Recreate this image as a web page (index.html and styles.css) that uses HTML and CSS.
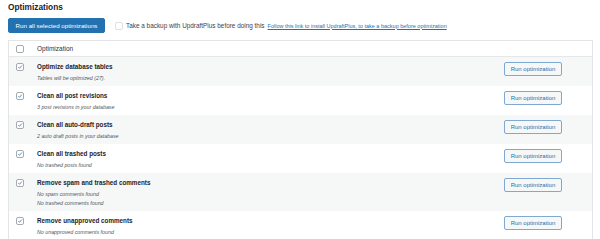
FILE: index.html
```html
<!DOCTYPE html>
<html>
<head>
<meta charset="utf-8">
<link rel="stylesheet" href="styles.css">
</head>
<body>
<div class="wrap">
  <h2 class="page-title">Optimizations</h2>
  <div class="actions">
    <button class="btn-primary">Run all selected optimizations</button>
    <label class="backup">
      <span class="cb cb-disabled"></span>
      <span class="backup-text">Take a backup with UpdraftPlus before doing this</span>
      <a class="backup-link" href="#">Follow this link to install UpdraftPlus, to take a backup before optimization</a>
    </label>
  </div>
  <div class="table">
    <div class="thead">
      <span class="cb"></span>
      <span class="th-label">Optimization</span>
    </div>
    <div class="row alt">
      <span class="cb checked"><svg viewBox="0 0 10 10"><path d="M2.2 5.2 L4.2 7.2 L8 2.6"/></svg></span>
      <div class="info">
        <div class="name">Optimize database tables</div>
        <div class="note">Tables will be optimized (27).</div>
      </div>
      <button class="btn-sec">Run optimization</button>
    </div>
    <div class="row">
      <span class="cb checked"><svg viewBox="0 0 10 10"><path d="M2.2 5.2 L4.2 7.2 L8 2.6"/></svg></span>
      <div class="info">
        <div class="name">Clean all post revisions</div>
        <div class="note">3 post revisions in your database</div>
      </div>
      <button class="btn-sec">Run optimization</button>
    </div>
    <div class="row alt">
      <span class="cb checked"><svg viewBox="0 0 10 10"><path d="M2.2 5.2 L4.2 7.2 L8 2.6"/></svg></span>
      <div class="info">
        <div class="name">Clean all auto-draft posts</div>
        <div class="note">2 auto draft posts in your database</div>
      </div>
      <button class="btn-sec">Run optimization</button>
    </div>
    <div class="row">
      <span class="cb checked"><svg viewBox="0 0 10 10"><path d="M2.2 5.2 L4.2 7.2 L8 2.6"/></svg></span>
      <div class="info">
        <div class="name">Clean all trashed posts</div>
        <div class="note">No trashed posts found</div>
      </div>
      <button class="btn-sec">Run optimization</button>
    </div>
    <div class="row alt">
      <span class="cb checked"><svg viewBox="0 0 10 10"><path d="M2.2 5.2 L4.2 7.2 L8 2.6"/></svg></span>
      <div class="info">
        <div class="name">Remove spam and trashed comments</div>
        <div class="note">No spam comments found</div>
        <div class="note">No trashed comments found</div>
      </div>
      <button class="btn-sec">Run optimization</button>
    </div>
    <div class="row">
      <span class="cb checked"><svg viewBox="0 0 10 10"><path d="M2.2 5.2 L4.2 7.2 L8 2.6"/></svg></span>
      <div class="info">
        <div class="name">Remove unapproved comments</div>
        <div class="note">No unapproved comments found</div>
      </div>
      <button class="btn-sec">Run optimization</button>
    </div>
  </div>
</div>
</body>
</html>
```
FILE: styles.css
```css
html, body {
  margin: 0;
  padding: 0;
  background: #ffffff;
}
body {
  font-family: "Liberation Sans", Arial, sans-serif;
  color: #1d2327;
  width: 600px;
  height: 239px;
  overflow: hidden;
}
.wrap {
  padding: 0 7px 0 8px;
}
.page-title {
  margin: 0;
  font-size: 8.3px;
  line-height: 14px;
  font-weight: 700;
  color: #1d2327;
}
.actions {
  margin-top: 4px;
  display: flex;
  align-items: center;
  height: 15px;
}
.btn-primary {
  height: 15px;
  width: 97px;
  padding: 0;
  border: 1px solid #2271b1;
  border-radius: 2px;
  background: #2271b1;
  color: #fff;
  font-family: inherit;
  font-size: 6.2px;
  line-height: 13px;
  white-space: nowrap;
}
.backup {
  display: flex;
  align-items: center;
  margin-left: 10px;
  font-size: 6.4px;
  color: #3c434a;
}
.cb {
  box-sizing: border-box;
  width: 8px;
  height: 8px;
  border: 1px solid #a7aaad;
  border-radius: 2px;
  background: #fff;
  flex: none;
  display: inline-flex;
}
.cb-disabled {
  border-color: #e0e0e2;
  margin-right: 3px;
}
.backup-link {
  margin-left: 3px;
  font-size: 5.5px;
  color: #2271b1;
  text-decoration: underline;
}
.cb svg {
  width: 100%;
  height: 100%;
}
.cb svg path {
  fill: none;
  stroke: #2271b1;
  stroke-width: 1.3;
}
.table {
  margin-top: 7px;
  border: 1px solid #e2e4e7;
}
.thead {
  display: flex;
  align-items: center;
  height: 16px;
  padding-left: 7px;
  border-bottom: 1px solid #e6e7e9;
  box-sizing: border-box;
}
.thead .cb {
  margin-top: 1px;
}
.th-label {
  margin-left: 13px;
  font-size: 6.5px;
  color: #2c3338;
}
.row {
  display: flex;
  align-items: flex-start;
  padding: 5px 30px 3px 7px;
  background: #fff;
}
.row.alt {
  background: #f6f7f7;
}
.row .cb {
  margin-top: 1px;
}
.info {
  flex: 1;
  margin-left: 13px;
}
.name {
  font-size: 6.3px;
  line-height: 9px;
  font-weight: 700;
  color: #1d2327;
  margin-bottom: 3px;
}
.note {
  font-size: 5.3px;
  line-height: 9px;
  font-style: italic;
  color: #50575e;
}
.btn-sec {
  box-sizing: border-box;
  width: 58px;
  height: 14px;
  padding: 0;
  border: 1px solid #7fa9d3;
  border-radius: 2px;
  background: #f6f7f7;
  color: #2271b1;
  font-family: inherit;
  font-size: 6px;
  line-height: 12px;
  white-space: nowrap;
}
```
